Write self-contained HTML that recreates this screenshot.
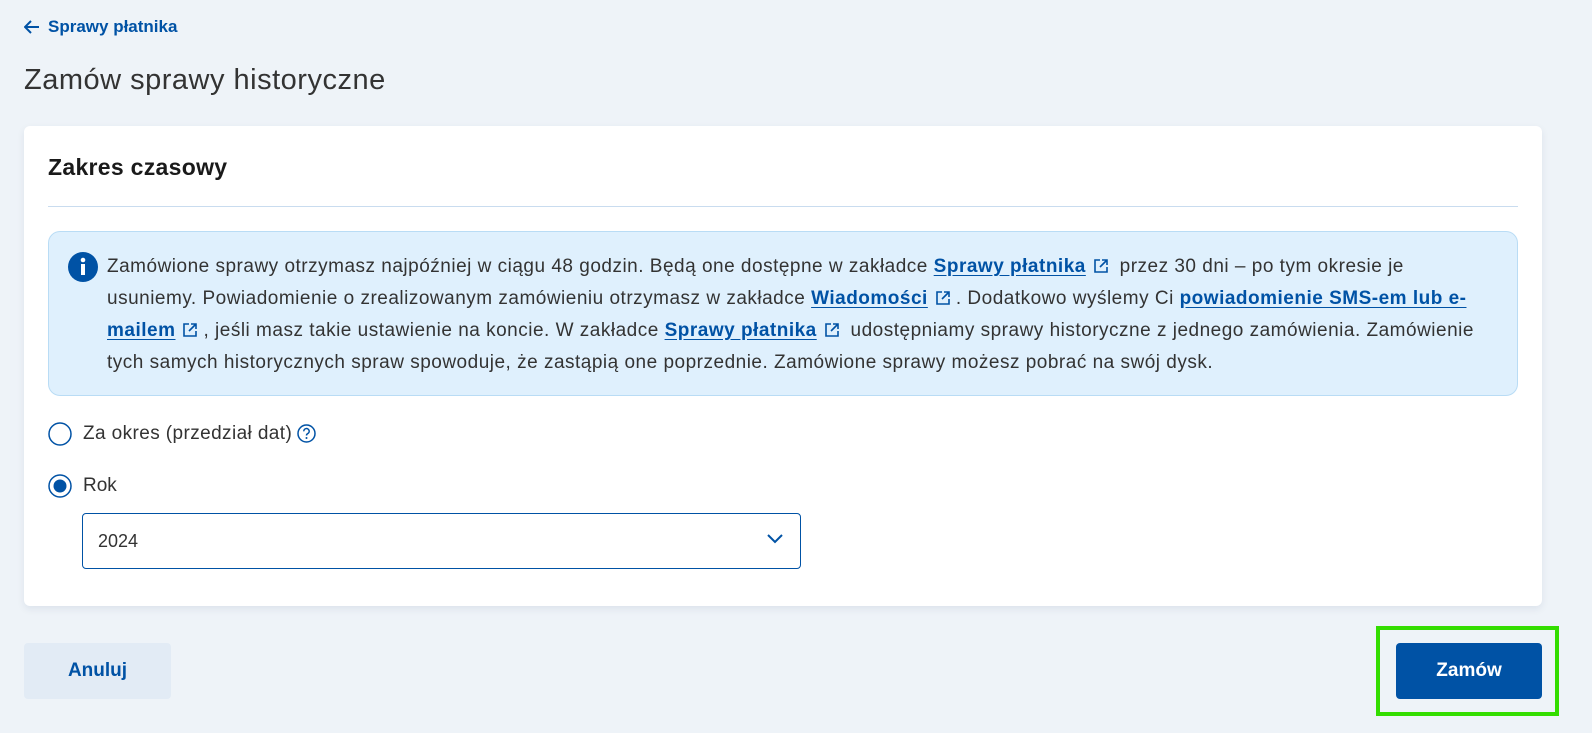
<!DOCTYPE html>
<html><head><meta charset="utf-8"><style>
*{box-sizing:border-box;margin:0;padding:0}
body{width:1592px;height:733px;background:#eef3f8;font-family:"Liberation Sans","DejaVu Sans",sans-serif;color:#333;position:relative;overflow:hidden}
.abs{position:absolute;white-space:nowrap}
a{color:#0052a5;font-weight:bold;text-decoration:underline;text-underline-offset:3px}
.ext{display:inline-block;width:14px;height:14px;vertical-align:-1px;margin:0 6px 0 8px}
.line{position:absolute;left:107px;font-size:19px;letter-spacing:0.5px;line-height:32px;white-space:nowrap;color:#333}
</style></head><body>
<div class="abs" style="left:24px;top:16px;font-size:17px;color:#0052a5;font-weight:bold;line-height:22px">
<svg width="16" height="14" viewBox="0 0 16 14" style="vertical-align:-2px;margin-right:8px"><path d="M15 7H2M7 1L1 7l6 6" fill="none" stroke="#0052a5" stroke-width="2"/></svg>Sprawy płatnika</div>
<div class="abs" style="left:24px;top:60px;font-size:29px;letter-spacing:0.5px;color:#333;line-height:40px">Zamów sprawy historyczne</div>

<div class="abs" style="left:24px;top:126px;width:1518px;height:480px;background:#fff;border-radius:6px;box-shadow:0 3px 8px rgba(0,40,90,.08)"></div>
<div class="abs" style="left:48px;top:152px;font-size:23px;letter-spacing:0.3px;font-weight:bold;color:#1a1a1a;line-height:30px">Zakres czasowy</div>
<div class="abs" style="left:48px;top:206px;width:1470px;height:1px;background:#c9dcef"></div>

<div class="abs" style="left:48px;top:231px;width:1470px;height:165px;background:#dff0fd;border:1px solid #b9dcf5;border-radius:12px"></div>
<svg class="abs" style="left:68px;top:252px" width="30" height="30" viewBox="0 0 30 30"><circle cx="15" cy="15" r="15" fill="#0052a5"/><rect x="13" y="12" width="4" height="11" fill="#fff"/><circle cx="15" cy="8" r="2.3" fill="#fff"/></svg>
<svg width="0" height="0" style="position:absolute"><defs><symbol id="e" viewBox="0 0 14 14"><path d="M6 1H1v12h12V8M8 1h5v5M13 1L6 8" fill="none" stroke="#0052a5" stroke-width="1.6"/></symbol></defs></svg>
<div class="line" style="top:251px">Zamówione sprawy otrzymasz najpóźniej w ciągu 48 godzin. Będą one dostępne w zakładce <a>Sprawy płatnika</a><svg class="ext"><use href="#e"/></svg> przez 30 dni – po tym okresie je</div>
<div class="line" style="top:283px">usuniemy. Powiadomienie o zrealizowanym zamówieniu otrzymasz w zakładce <a>Wiadomości</a><svg class="ext"><use href="#e"/></svg>. Dodatkowo wyślemy Ci <a>powiadomienie SMS-em lub e-</a></div>
<div class="line" style="top:315px"><a>mailem</a><svg class="ext"><use href="#e"/></svg>, jeśli masz takie ustawienie na koncie. W zakładce <a>Sprawy płatnika</a><svg class="ext"><use href="#e"/></svg> udostępniamy sprawy historyczne z jednego zamówienia. Zamówienie</div>
<div class="line" style="top:347px">tych samych historycznych spraw spowoduje, że zastąpią one poprzednie. Zamówione sprawy możesz pobrać na swój dysk.</div>

<svg class="abs" style="left:48px;top:422px" width="24" height="24"><circle cx="12" cy="12" r="11" fill="#fff" stroke="#0052a5" stroke-width="1.5"/></svg>
<div class="abs" style="left:83px;top:422px;font-size:19px;letter-spacing:0.4px;line-height:24px">Za okres (przedział dat)</div>
<svg class="abs" style="left:297px;top:424px" width="19" height="19" viewBox="0 0 19 19"><circle cx="9.5" cy="9.5" r="8.5" fill="none" stroke="#0052a5" stroke-width="1.5"/><path d="M6.8 7.3a2.7 2.7 0 1 1 3.8 2.4c-.8.4-1.1.9-1.1 1.8" fill="none" stroke="#0052a5" stroke-width="1.5"/><circle cx="9.5" cy="14" r="1" fill="#0052a5"/></svg>
<svg class="abs" style="left:48px;top:474px" width="24" height="24"><circle cx="12" cy="12" r="11" fill="#fff" stroke="#0052a5" stroke-width="1.5"/><circle cx="12" cy="12" r="6.5" fill="#0052a5"/></svg>
<div class="abs" style="left:83px;top:474px;font-size:19px;line-height:24px">Rok</div>

<div class="abs" style="left:82px;top:513px;width:719px;height:56px;border:1px solid #0052a5;border-radius:4px;background:#fff"></div>
<div class="abs" style="left:98px;top:529px;font-size:18px;line-height:24px">2024</div>
<svg class="abs" style="left:766px;top:533px" width="18" height="12"><path d="M2 2l7 7 7-7" fill="none" stroke="#0052a5" stroke-width="2"/></svg>

<div class="abs" style="left:24px;top:643px;width:147px;height:56px;background:#e2ebf5;border-radius:4px;color:#0052a5;font-weight:bold;font-size:19px;line-height:56px;text-align:center">Anuluj</div>
<div class="abs" style="left:1376px;top:626px;width:183px;height:90px;border:4px solid #33dd00"></div>
<div class="abs" style="left:1396px;top:643px;width:146px;height:56px;background:#0052a5;border-radius:4px;color:#fff;font-weight:bold;font-size:19px;line-height:56px;text-align:center">Zamów</div>
</body></html>
